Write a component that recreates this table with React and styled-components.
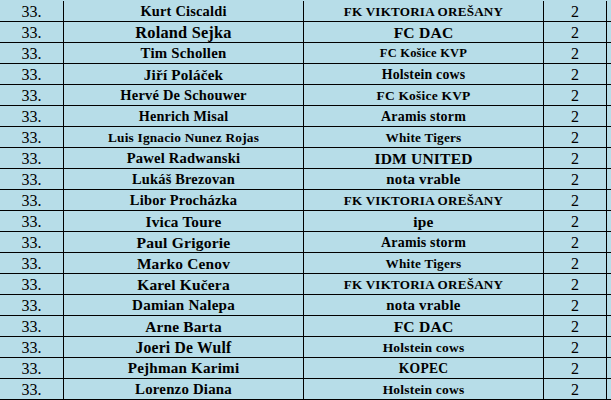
import React, { useMemo } from 'react';
import styled, { createGlobalStyle } from 'styled-components';

const GlobalStyle = createGlobalStyle`
  html, body {
    margin: 0;
    padding: 0;
    background: #b7dde8;
  }
`;

const FONT = '"Liberation Serif", "Times New Roman", serif';

const Sheet = styled.div`
  width: 611px;
  height: 400px;
  overflow: hidden;
  padding-top: 1px;
  box-sizing: border-box;
  background: #b7dde8;
  color: #000;
`;

const Row = styled.div`
  display: grid;
  grid-template-columns: 64px 240px 240px 63px;
  height: 21px;
  box-sizing: border-box;
  border-bottom: 1px solid #000;
`;

const Cell = styled.div`
  display: flex;
  align-items: center;
  justify-content: center;
  border-right: 1px solid #000;
  white-space: nowrap;
  overflow: hidden;
  font-family: ${FONT};
  font-size: 16px;
  font-weight: 400;
  padding-top: 1px;
`;

const NameCell = styled(Cell)`
  font-weight: 700;
  letter-spacing: 0.2px;
`;

// name, width in the sheet, look size, team, width in the sheet, look size
const rows = [
  ['Kurt Ciscaldi', 88, 14, 'FK VIKTORIA OREŠANY', 149, 14],
  ['Roland Sejka', 98, 16, 'FC DAC', 58, 16],
  ['Tim Schollen', 90, 14, 'FC Košice KVP', 70, 14],
  ['Jiří Poláček', 85, 14, 'Holstein cows', 82, 14],
  ['Hervé De Schouwer', 121, 15, 'FC Košice KVP', 90, 14],
  ['Henrich Misal', 84, 15, 'Aramis storm', 78, 15],
  ['Luis Ignacio Nunez Rojas', 142, 14, 'White Tigers', 71, 14],
  ['Pawel Radwanski', 102, 16, 'IDM UNITED', 95, 16],
  ['Lukáš Brezovan', 98, 15, 'nota vrable', 73, 15],
  ['Libor Procházka', 103, 15, 'FK VIKTORIA OREŠANY', 149, 14],
  ['Ivica Toure', 82, 14, 'ipe', 22, 14],
  ['Paul Grigorie', 97, 15, 'Aramis storm', 78, 15],
  ['Marko Cenov', 95, 15, 'White Tigers', 71, 14],
  ['Karel Kučera', 95, 15, 'FK VIKTORIA OREŠANY', 149, 14],
  ['Damian Nalepa', 103, 15, 'nota vrable', 73, 15],
  ['Arne Barta', 83, 14, 'FC DAC', 58, 16],
  ['Joeri De Wulf', 100, 15, 'Holstein cows', 78, 14],
  ['Pejhman Karimi', 112, 15, 'KOPEC', 44, 15],
  ['Lorenzo Diana', 102, 14, 'Holstein cows', 78, 14],
];

let ctx = null;
function fitSize(text, width, look) {
  if (!ctx) ctx = document.createElement('canvas').getContext('2d');
  ctx.font = `700 20px ${FONT}`;
  const w = ctx.measureText(text).width + text.length * 0.2;
  const fit = (20 * width) / w;
  return Math.max(12.5, Math.min(17, (fit + look) / 2));
}

export default function App() {
  const sized = useMemo(
    () =>
      rows.map(([n, nw, nl, t, tw, tl]) => [n, fitSize(n, nw, nl), t, fitSize(t, tw, tl)]),
    []
  );
  return (
    <>
      <GlobalStyle />
      <Sheet>
        {sized.map(([name, ns, team, ts], i) => (
          <Row key={i}>
            <Cell>33.</Cell>
            <NameCell style={{ fontSize: ns }}>{name}</NameCell>
            <NameCell style={{ fontSize: ts }}>{team}</NameCell>
            <Cell>2</Cell>
          </Row>
        ))}
      </Sheet>
    </>
  );
}
